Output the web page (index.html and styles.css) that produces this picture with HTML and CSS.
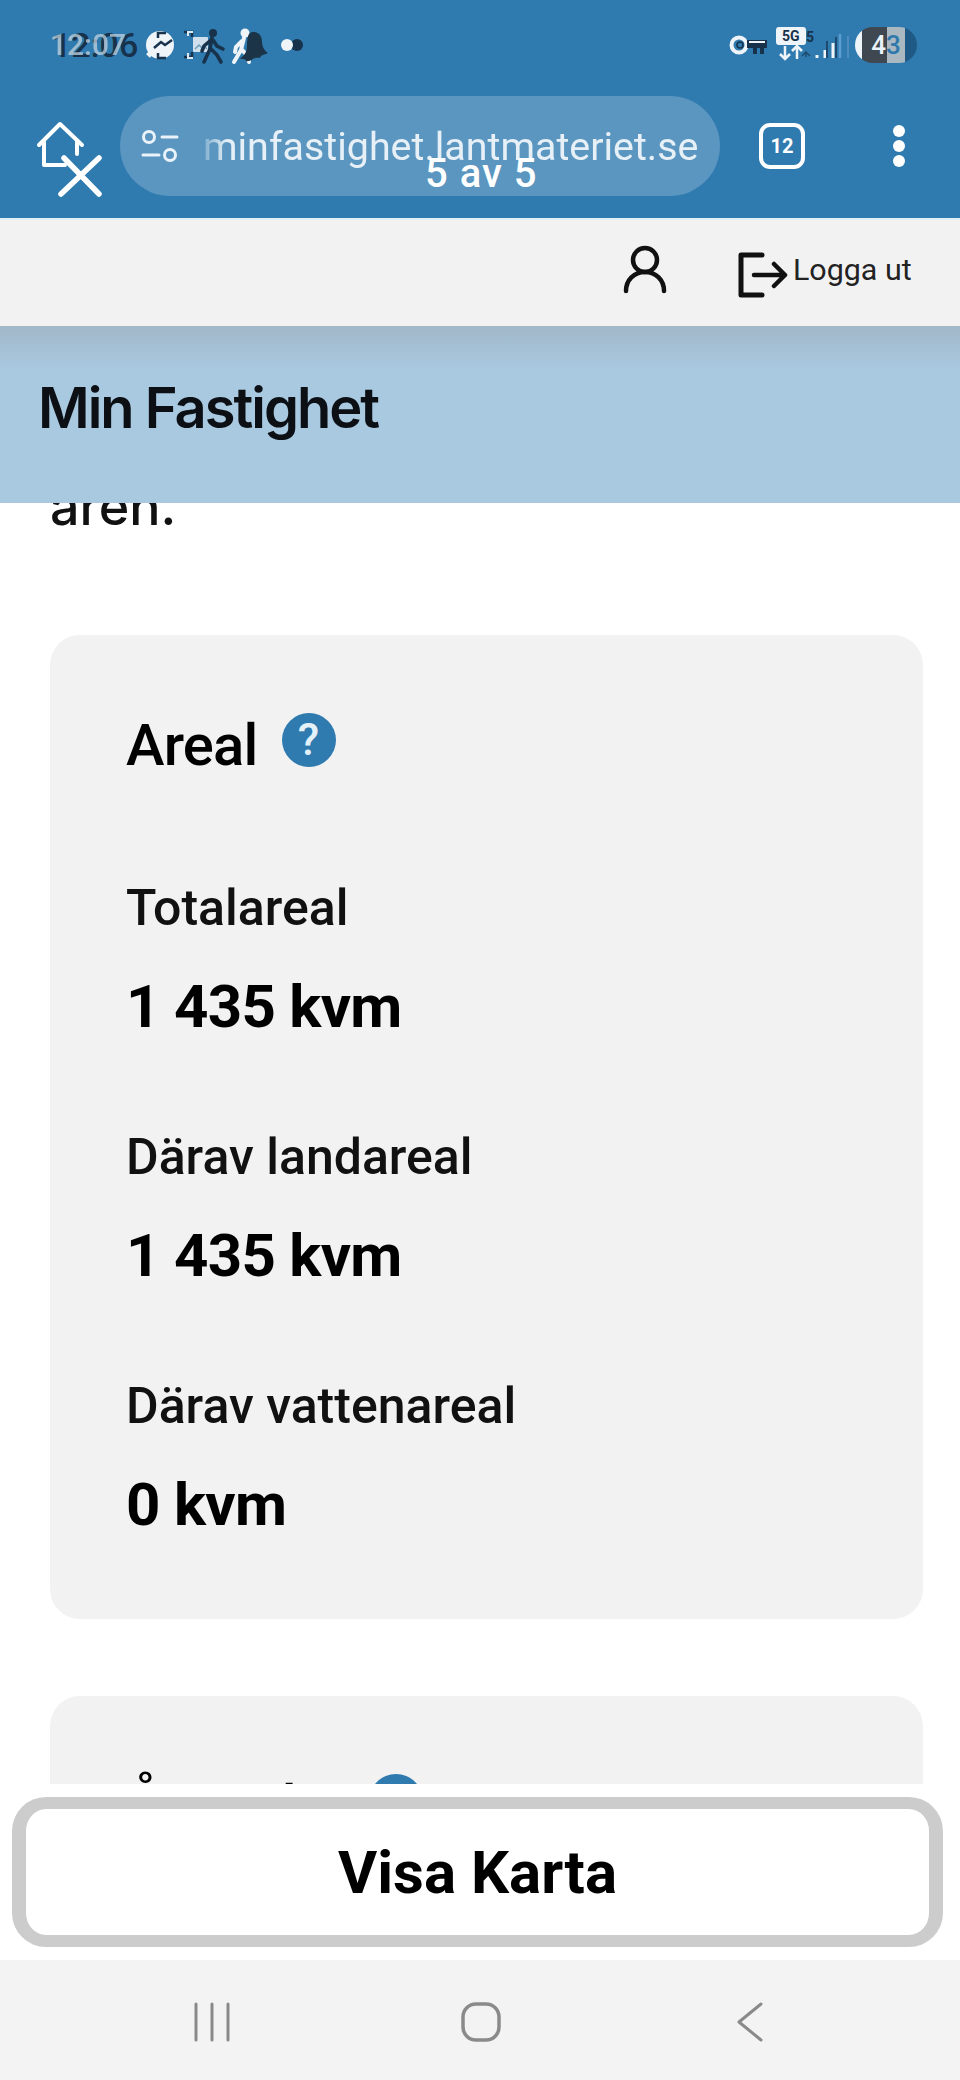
FILE: index.html
```html
<!DOCTYPE html>
<html lang="sv">
<head>
<meta charset="utf-8">
<title>Min Fastighet</title>
<link rel="stylesheet" href="styles.css">
</head>
<body>
<div class="phone">
  <header class="chrome">
    <div class="status">
      <div class="status-left">
        <span class="time"><span class="time-b">12:06</span><span class="time-a">12:07</span></span>
        <svg class="status-icons" width="134" height="40" viewBox="0 0 134 40">
          <circle cx="14" cy="20" r="14" fill="#eef4f8"/>
          <path d="M2 31l6-7" stroke="#eef4f8" stroke-width="5"/>
          <path d="M8 23l7-6 4 3 7-5" stroke="#17324a" stroke-width="2.5" fill="none"/>
          <path d="M20 8h-8v5M12 28v5h8M38 7h8v5M46 27v5h-8" stroke="#17324a" stroke-width="2.5" fill="none"/>
          <path d="M47 7h-5v4M42 28v5h5" stroke="#dbe8f1" stroke-width="2" fill="none"/>
          <rect x="47" y="12" width="15" height="15" rx="1" fill="#cfe0ec"/>
          <path d="M49 24l4-4 3 3 2-2 3 3" stroke="#6f9dbd" stroke-width="1.5" fill="none"/>
          <circle cx="67" cy="8" r="4" fill="#17324a"/>
          <path d="M66 12 64 24 58 37M65 24l6 6 4 7M65 15l-7 6-2 5M67 15l4 6 6 3" stroke="#17324a" stroke-width="3.6" fill="none" stroke-linecap="round"/>
          <circle cx="99" cy="8" r="4.5" fill="#eef4f8"/>
          <path d="M98 13 95 25 88 37M96 25l5 5 2 7M96 16l-6 6-1 5" stroke="#eef4f8" stroke-width="4" fill="none" stroke-linecap="round"/>
          <path d="M107 7c6 0 9 4 9 10 0 5 3 9 6 11-3 2-5 1-7 3-1 3-3 1-6 2-3 1-5 4-9 3-1-3-4-1-6-3 4-2 7-6 7-12 0-8 1-14 6-14z" fill="#1b3448"/>
        </svg>
        <span class="dots"><i class="dot-light"></i><i class="dot-dark"></i></span>
      </div>
      <div class="status-right">
        <svg class="key" width="38" height="22" viewBox="0 0 38 22">
          <circle cx="10" cy="11" r="7.5" fill="none" stroke="#eef4f8" stroke-width="4"/>
          <circle cx="11" cy="11" r="3" fill="none" stroke="#17324a" stroke-width="1.5"/>
          <path d="M18 6h20v8H18z" fill="#17324a"/>
          <path d="M20 8h16" stroke="#eef4f8" stroke-width="2"/>
          <path d="M26 14v6M33 14v6" stroke="#17324a" stroke-width="4"/>
        </svg>
        <svg class="net" width="74" height="36" viewBox="0 0 74 36">
          <rect x="0" y="0" width="30" height="18" rx="3" fill="#eef4f8"/>
          <text x="6" y="14" class="net-text">5G</text>
          <path d="M9 19v13M4 27l5 5 5-5M21 32V19M16 24l5-5 5 5" stroke="#eef4f8" stroke-width="2.5" fill="none"/>
          <path d="M30 30v-5M26 29l4-4 4 4" stroke="#1d4a6e" stroke-width="1.5" fill="none"/>
          <text x="30" y="15" class="net-five">5</text>
          <path d="M41 31v-3M49 31v-8M57 31V16" stroke="#eef4f8" stroke-width="3"/>
          <path d="M51 31V14M60 31V10" stroke="#1d4a6e" stroke-width="2"/>
          <path d="M64 31V7" stroke="#5c9ed0" stroke-width="2.5"/>
          <path d="M72 31V9" stroke="#4d8cbc" stroke-width="2"/>
        </svg>
        <span class="battery"><span class="battery-num">4</span><span class="battery-num alt">3</span></span>
      </div>
    </div>
    <div class="toolbar">
      <svg class="home" width="66" height="78" viewBox="0 0 66 78">
        <path d="M3 25 24 4l22 21M8 20v25h21M41 20v14" fill="none" stroke="#fff" stroke-width="4" stroke-linecap="round" stroke-linejoin="round"/>
        <path d="M28 38 63 74M63 38 25 74" stroke="#fff" stroke-width="5.5" stroke-linecap="round"/>
      </svg>
      <div class="urlbar">
        <svg class="tune" width="38" height="32" viewBox="0 0 38 32">
          <circle cx="8" cy="7" r="5.5" fill="none" stroke="#eaf3f9" stroke-width="3"/>
          <path d="M21 7h15M2 25h16" stroke="#eaf3f9" stroke-width="3" stroke-linecap="round"/>
          <circle cx="29" cy="25" r="5.5" fill="none" stroke="#eaf3f9" stroke-width="3"/>
        </svg>
        <span class="url">minfastighet.lantmateriet.se</span>
      </div>
      <div class="tabs">12</div>
      <div class="more"><i></i><i></i><i></i></div>
      <div class="toast">5 av 5</div>
    </div>
  </header>

  <nav class="site-nav">
    <svg class="user" width="46" height="50" viewBox="0 0 46 50">
      <circle cx="23" cy="15" r="12" fill="none" stroke="#111" stroke-width="4.5"/>
      <path d="M4 46c0-11 8-19 19-19s19 8 19 19" fill="none" stroke="#111" stroke-width="4.5" stroke-linecap="round"/>
    </svg>
    <div class="logout">
      <svg width="50" height="46" viewBox="0 0 50 46">
        <path d="M24 3H3v40h21" fill="none" stroke="#111" stroke-width="5" stroke-linejoin="round" stroke-linecap="round"/>
        <path d="M16 23h31M36 12l11 11-11 11" fill="none" stroke="#111" stroke-width="4.5" stroke-linecap="round" stroke-linejoin="round"/>
      </svg>
      <span>Logga ut</span>
    </div>
  </nav>

  <div class="page-title"><h1>Min Fastighet</h1></div>

  <main class="content">
    <p class="intro">aren.</p>
    <section class="card">
      <h2>Areal <span class="help">?</span></h2>
      <dl>
        <dt>Totalareal</dt><dd>1 435 kvm</dd>
        <dt>Därav landareal</dt><dd>1 435 kvm</dd>
        <dt>Därav vattenareal</dt><dd>0 kvm</dd>
      </dl>
    </section>
    <section class="card">
      <h2>Åtgärder <span class="help">?</span></h2>
    </section>
  </main>

  <div class="action"><button class="map-btn">Visa Karta</button></div>

  <footer class="sysnav">
    <svg width="40" height="40" viewBox="0 0 40 40"><path d="M4 2v36M20 2v36M36 2v36" stroke="#8a8a8a" stroke-width="3" stroke-linecap="round"/></svg>
    <svg width="40" height="40" viewBox="0 0 40 40"><rect x="2" y="2" width="36" height="36" rx="13" fill="none" stroke="#8a8a8a" stroke-width="3.5"/></svg>
    <svg width="40" height="40" viewBox="0 0 40 40"><path d="M31 2 9 20l22 18" fill="none" stroke="#8a8a8a" stroke-width="3" stroke-linecap="round" stroke-linejoin="round"/></svg>
  </footer>
</div>
</body>
</html>
```

FILE: styles.css
```css
* { box-sizing: border-box; }
html, body { margin: 0; padding: 0; }
body { font-family: Roboto, "Liberation Sans", sans-serif; background: #fff; color: #000; }
.phone { width: 960px; height: 2080px; display: flex; flex-direction: column; overflow: hidden; }

.chrome { height: 218px; background: #2f7bb0; flex: none; }
.status { height: 88px; padding: 2px 43px 0 48px; display: flex; justify-content: space-between; align-items: center; }
.status-left, .status-right { display: flex; align-items: center; }
.time { position: relative; font-weight: 500; width: 98px; height: 40px; line-height: 40px; flex: none; }
.time-a { position: absolute; left: 2px; top: 0; color: #c4d4de; font-size: 30px; opacity: .75; }
.time-b { position: absolute; left: 4px; top: 0; color: #17324a; font-size: 34px; }
.status-icons { flex: none; }
.dots { display: flex; margin-left: 1px; }
.dots i { width: 12px; height: 12px; border-radius: 50%; display: block; }
.dot-light { background: #eef4f8; position: relative; z-index: 1; }
.dot-dark { background: #17324a; margin-left: -2px; }
.key { margin-right: 9px; }
.net { margin-right: 5px; margin-top: -1px; }
.net-text { font: 700 14px Roboto, sans-serif; fill: #17324a; }
.net-five { font: 700 14px Roboto, sans-serif; fill: #17324a; }
.battery { width: 62px; height: 36px; border-radius: 18px; background: linear-gradient(90deg, #eef4f8 0 11%, #3f4750 11% 52%, #aab8c2 52% 80%, #1e5a85 80%); display: flex; align-items: center; justify-content: center; font-size: 26px; font-weight: 500; }
.battery-num { color: #eaf3f9; }
.battery-num.alt { color: #2f78ab; }

.toolbar { position: relative; height: 130px; display: flex; align-items: flex-start; padding: 8px 0 0 36px; }
.home { margin-top: 24px; flex: none; }
.urlbar { width: 600px; height: 100px; margin-left: 18px; border-radius: 50px; background: #5a96c0; display: flex; align-items: center; padding: 0 0 0 21px; color: #e6f0f6; flex: none; }
.tune { flex: none; }
.url { margin-left: 24px; font-size: 39.4px; white-space: nowrap; -webkit-mask-image: linear-gradient(90deg, rgba(0,0,0,.25) 0, #000 24px); mask-image: linear-gradient(90deg, rgba(0,0,0,.25) 0, #000 24px); }
.tabs { width: 46px; height: 46px; margin: 27px 0 0 39px; border: 4.5px solid #fff; border-radius: 11px; color: #fff; font-size: 20px; font-weight: 700; display: flex; align-items: center; justify-content: center; flex: none; }
.more { display: flex; flex-direction: column; gap: 3px; margin: 29px 0 0 88px; flex: none; }
.more i { width: 12px; height: 12px; background: #fff; border-radius: 50%; display: block; }
.toast { position: absolute; left: 425px; top: 66px; color: #fff; font-size: 40px; font-weight: 500; line-height: 40px; letter-spacing: 1px; }

.site-nav { height: 108px; flex: none; background: #f2f2f3; border-top: 2px solid #dff0f7; display: flex; align-items: center; padding: 0 40px 0 622px; }
.user { flex: none; margin-top: -7px; }
.logout { display: flex; align-items: center; margin-left: 70px; font-size: 30.4px; color: #222; }
.logout svg { margin-top: 3px; flex: none; }
.logout span { margin-left: 5px; margin-top: -7px; white-space: nowrap; }

.page-title { height: 177px; flex: none; background: linear-gradient(#a0b8c8 0, #a9c9e0 44px); padding: 0 0 14px 38px; display: flex; align-items: center; }
.page-title h1 { margin: 0; font-family: Inter, sans-serif; font-weight: 600; font-size: 56px; letter-spacing: -2px; color: #0c0f14; }

.content { flex: 1; min-height: 0; overflow: hidden; padding: 0 37px 0 50px; }
.intro { margin: -26px 0 0; font-family: Inter, sans-serif; font-weight: 500; font-size: 52px; line-height: 60px; color: #111; }
.card { background: #f2f2f2; border-radius: 30px; padding: 80px 76px 86px; margin-bottom: 77px; }
.intro + .card { margin-top: 98px; }
.card h2 { margin: 0; font-family: Roboto, sans-serif; font-weight: 500; font-size: 58px; letter-spacing: -.8px; line-height: 60px; display: flex; align-items: flex-start; gap: 24px; }
.help { width: 54px; height: 54px; border-radius: 50%; background: #2f7bb0; color: #e4f1f8; font-size: 44px; font-weight: 500; letter-spacing: 0; display: flex; align-items: center; justify-content: center; margin-top: -2px; }
dl { margin: 106px 0 0; }
dt { font-size: 50px; font-weight: 500; letter-spacing: 0; line-height: 54px; color: #111; }
dd { margin: 44px 0 95px; font-size: 60px; letter-spacing: -.7px; font-weight: 700; line-height: 56px; }
dd:last-child { margin-bottom: 0; }

.action { flex: none; height: 176px; background: #fff; padding: 13px 17px 13px 12px; }
.map-btn { display: block; width: 100%; height: 150px; background: #fff; border-style: solid; border-color: #cccccc; border-width: 12px 14px; border-radius: 34px; font-family: Roboto, sans-serif; font-size: 60px; font-weight: 700; color: #000; }

.sysnav { height: 120px; flex: none; background: #f3f3f3; display: flex; align-items: center; justify-content: space-between; padding: 4px 190px 0 192px; }
```
